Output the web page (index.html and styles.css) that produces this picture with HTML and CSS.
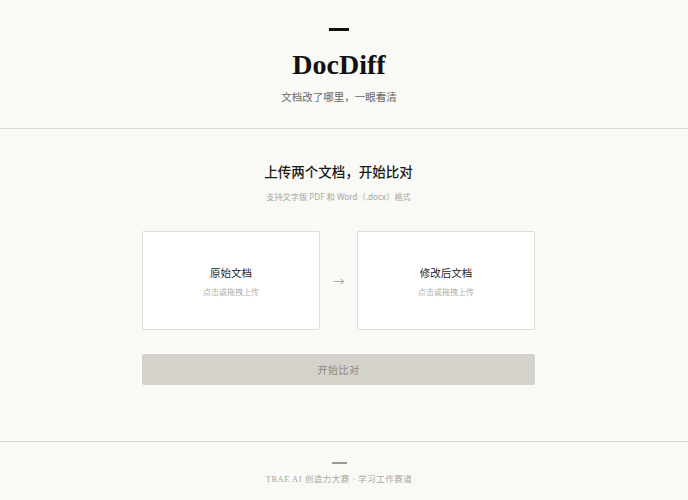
FILE: index.html
```html
<!DOCTYPE html>
<html lang="zh-CN">
<head>
    <meta charset="UTF-8">
    <meta name="viewport" content="width=device-width, initial-scale=1.0">
    <title>DocDiff</title>
    <link rel="stylesheet" href="styles.css">
</head>
<body>
    <header class="header">
        <div class="header-mark"></div>
        <h1 class="brand">DocDiff</h1>
        <p class="tagline">文档改了哪里，一眼看清</p>
    </header>

    <main class="upload">
        <h2 class="upload-title">上传两个文档，开始比对</h2>
        <p class="upload-hint">支持文字版 PDF 和 Word（.docx）格式</p>

        <div class="drop-row">
            <div class="drop-card">
                <div class="drop-name">原始文档</div>
                <div class="drop-sub">点击或拖拽上传</div>
            </div>
            <div class="drop-arrow">→</div>
            <div class="drop-card">
                <div class="drop-name">修改后文档</div>
                <div class="drop-sub">点击或拖拽上传</div>
            </div>
        </div>

        <button class="compare-button" disabled>开始比对</button>
    </main>

    <footer class="footer">
        <div class="footer-mark"></div>
        <p class="footer-text">TRAE AI 创造力大赛 · 学习工作赛道</p>
    </footer>
</body>
</html>
```

FILE: styles.css
```css
body {
    margin: 0;
    background-color: #f9f9f5;
    color: #1a1a1a;
    font-family: "Noto Sans", "Noto Sans CJK SC", sans-serif;
}
.header {
    display: flex;
    flex-direction: column;
    align-items: center;
    padding: 28px 10px 0 0;
    height: 100px;
    border-bottom: 1px solid #dddad3;
}
.header-mark {
    width: 20px;
    height: 3px;
    background-color: #111;
}
.brand {
    margin: 14px 0 0;
    font-family: "Liberation Serif", "Noto Sans CJK SC", serif;
    font-size: 28px;
    font-weight: 700;
    line-height: 40px;
    color: #111;
}
.tagline {
    margin: 4px 0 0;
    font-family: "Liberation Serif", "Noto Sans CJK SC", serif;
    font-size: 10.5px;
    color: #666;
}
.upload {
    width: 393px;
    margin: 0 auto;
    padding: 31px 11px 0 0;
    height: 280px;
    display: flex;
    flex-direction: column;
    align-items: center;
}
.upload-title {
    margin: 0;
    font-family: "Noto Sans CJK SC", serif;
    font-size: 13.5px;
    font-weight: 500;
    line-height: 22px;
    color: #1a1a1a;
}
.upload-hint {
    margin: 8px 0 0;
    font-size: 8.2px;
    color: #a8a6a0;
}
.drop-row {
    display: flex;
    align-items: center;
    width: 100%;
    margin-top: 29px;
}
.drop-card {
    flex: 1;
    height: 97px;
    background-color: #fff;
    border: 1px solid #e0ddd6;
    border-radius: 2px;
    display: flex;
    flex-direction: column;
    align-items: center;
    justify-content: center;
    cursor: pointer;
}
.drop-name {
    font-family: "Noto Sans CJK SC", serif;
    font-size: 10.5px;
    color: #222;
}
.drop-sub {
    margin-top: 6px;
    font-size: 8px;
    color: #b0aea8;
}
.drop-arrow {
    width: 37px;
    text-align: center;
    color: #999;
    font-family: "DejaVu Sans", sans-serif;
    font-size: 14px;
    font-weight: 300;
}
.compare-button {
    width: 100%;
    height: 31px;
    margin-top: 24px;
    border: none;
    border-radius: 2px;
    background-color: #d5d1cb;
    color: #8a8680;
    font-family: "Noto Sans CJK SC", sans-serif;
    font-size: 10px;
    letter-spacing: 0.5px;
}
.footer {
    border-top: 1px solid #dddad3;
    margin-top: 1px;
    padding: 20px 10px 0 0;
    display: flex;
    flex-direction: column;
    align-items: center;
}
.footer-mark {
    width: 15px;
    height: 2px;
    background-color: #999;
}
.footer-text {
    margin: 8px 0 0;
    font-family: "Liberation Serif", "Noto Sans CJK SC", serif;
    font-size: 8.5px;
    letter-spacing: 0.5px;
    color: #a8a6a0;
}
```
